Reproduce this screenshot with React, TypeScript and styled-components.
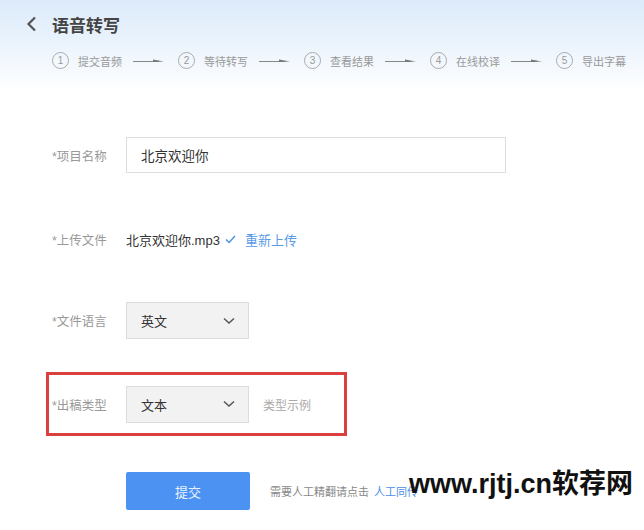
import React from 'react';
import styled, { createGlobalStyle } from 'styled-components';

const GlobalStyle = createGlobalStyle`
  html, body {
    margin: 0;
    padding: 0;
    background: #fff;
  }
  body {
    font-family: "Liberation Sans", "Noto Sans CJK SC", sans-serif;
    color: #333;
  }
`;

//styles
const Page = styled.div`
  position: relative;
  width: 644px;
  height: 530px;
  overflow: hidden;
  background: #fff;
`;

const Header = styled.div`
  height: 92px;
  box-sizing: border-box;
  padding: 13px 0 0 26px;
  background: linear-gradient(to bottom, #dcebfa 0%, #eaf3fc 45%, #ffffff 100%);
`;

const TitleRow = styled.div`
  display: flex;
  align-items: center;
  gap: 15px;
  height: 22px;
`;

const Title = styled.span`
  font-size: 17px;
  font-weight: bold;
  color: #444;
`;

const Steps = styled.div`
  display: flex;
  align-items: center;
  margin: 17px 0 0 26px;
`;

const Step = styled.div`
  display: flex;
  align-items: center;
  width: 126px;
  flex-shrink: 0;
`;

const Circle = styled.span`
  display: inline-flex;
  align-items: center;
  justify-content: center;
  width: 15px;
  height: 15px;
  border: 1px solid #aaa;
  border-radius: 50%;
  font-size: 10px;
  color: #999;
  margin-right: 9px;
`;

const StepText = styled.span`
  font-size: 11px;
  color: #999;
  width: 45px;
  white-space: nowrap;
`;

const Arrow = styled.svg`
  margin-left: 10px;
`;

const Form = styled.div`
  display: flex;
  flex-direction: column;
  padding: 45px 0 0 52px;
`;

const Row = styled.div<{ $height: number; $gap?: number }>`
  display: flex;
  align-items: center;
  height: ${(p) => p.$height}px;
  margin-bottom: ${(p) => p.$gap ?? 0}px;
`;

const Highlight = styled.div`
  display: flex;
  align-items: center;
  box-sizing: border-box;
  width: 301px;
  height: 64px;
  margin-left: -6px;
  padding-left: 3px;
  border: 3px solid #d9403f;
  margin-bottom: 36px;
`;

const Label = styled.span`
  width: 74px;
  flex-shrink: 0;
  font-size: 12.5px;
  color: #999;
  white-space: nowrap;
`;

const TextInput = styled.div`
  box-sizing: border-box;
  width: 380px;
  height: 36px;
  border: 1px solid #ddd;
  background: #fff;
  display: flex;
  align-items: center;
  padding-left: 14px;
  font-size: 13.5px;
  color: #333;
`;

const FileName = styled.span`
  font-size: 13px;
  color: #333;
`;

const Check = styled.svg`
  margin: 0 9px 0 5px;
`;

const LinkText = styled.span`
  font-size: 13px;
  color: #5a9be8;
`;

const Select = styled.div`
  box-sizing: border-box;
  width: 123px;
  height: 37px;
  border: 1px solid #dcdcdc;
  background: #f2f2f2;
  display: flex;
  align-items: center;
  justify-content: space-between;
  padding: 0 12px 0 14px;
  font-size: 13px;
  color: #333;
`;

const Hint = styled.span`
  margin-left: 14px;
  font-size: 12px;
  color: #aaa;
`;

const SubmitButton = styled.button`
  width: 124px;
  height: 38px;
  border: none;
  border-radius: 2px;
  background: #4c92f3;
  color: #eaf2fe;
  font-size: 13px;
  font-family: inherit;
  padding: 0;
`;

const Note = styled.span`
  margin-left: 20px;
  font-size: 11px;
  color: #888;
  white-space: nowrap;
`;

const NoteLink = styled.span`
  color: #4a8fe6;
  margin-left: 5px;
`;

const Watermark = styled.div`
  position: absolute;
  left: 409px;
  top: 462px;
  font-size: 27px;
  font-weight: bold;
  color: #111;
  white-space: nowrap;
`;

function Chevron() {
  return (
    <svg width="14" height="10" viewBox="0 0 14 10">
      <path d="M2 2.5 L7 7 L12 2.5" fill="none" stroke="#555" strokeWidth="1.5" />
    </svg>
  );
}

const steps = ['提交音频', '等待转写', '查看结果', '在线校译', '导出字幕'];

export default function App() {
  return (
    <Page>
      <GlobalStyle />
      <Header>
        <TitleRow>
          <svg width="11" height="16" viewBox="0 0 11 16">
            <path d="M9 1.5 L2.5 8 L9 14.5" fill="none" stroke="#555" strokeWidth="2.2" />
          </svg>
          <Title>语音转写</Title>
        </TitleRow>
        <Steps>
          {steps.map((s, i) => (
            <Step key={s}>
              <Circle>{i + 1}</Circle>
              <StepText>{s}</StepText>
              {i < steps.length - 1 && (
                <Arrow width="31" height="6" viewBox="0 0 31 6">
                  <line x1="0" y1="3.5" x2="26" y2="3.5" stroke="#888" strokeWidth="1" />
                  <path d="M20 1.5 L31 3.5 L20 4 Z" fill="#777" />
                </Arrow>
              )}
            </Step>
          ))}
        </Steps>
      </Header>

      <Form>
        <Row $height={36} $gap={56}>
          <Label>*项目名称</Label>
          <TextInput>北京欢迎你</TextInput>
        </Row>
        <Row $height={20} $gap={53}>
          <Label>*上传文件</Label>
          <FileName>北京欢迎你.mp3</FileName>
          <Check width="11" height="9" viewBox="0 0 11 9">
            <path d="M1 4.5 L4 7.5 L10 1" fill="none" stroke="#4a8fe6" strokeWidth="1.4" />
          </Check>
          <LinkText>重新上传</LinkText>
        </Row>
        <Row $height={37} $gap={33}>
          <Label>*文件语言</Label>
          <Select>
            英文
            <Chevron />
          </Select>
        </Row>
        <Highlight>
          <Label>*出稿类型</Label>
          <Select>
            文本
            <Chevron />
          </Select>
          <Hint>类型示例</Hint>
        </Highlight>
        <Row $height={38}>
          <Label />
          <SubmitButton>提交</SubmitButton>
          <Note>
            需要人工精翻请点击<NoteLink>人工同传</NoteLink>
          </Note>
        </Row>
      </Form>

      <Watermark>www.rjtj.cn软荐网</Watermark>
    </Page>
  );
}
